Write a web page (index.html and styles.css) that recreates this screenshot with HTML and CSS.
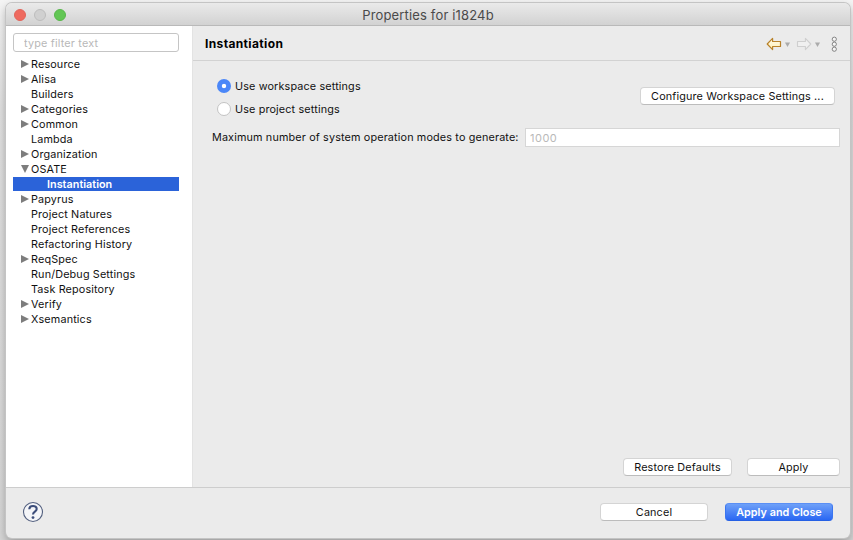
FILE: index.html
```html
<!DOCTYPE html>
<html lang="en">
<head>
<meta charset="utf-8">
<title>Properties for i1824b</title>
<link rel="stylesheet" href="styles.css">
</head>
<body>
<div class="window">
  <header class="titlebar">
    <div class="lights"><i class="light close"></i><i class="light minimize"></i><i class="light zoom"></i></div>
    <span class="title">Properties for i1824b</span>
  </header>
  <div class="body">
    <aside class="sidebar">
      <input class="filter" type="text" placeholder="type filter text">
      <ul class="tree">
        <li class="closed"><span>Resource</span></li>
        <li class="closed"><span>Alisa</span></li>
        <li><span>Builders</span></li>
        <li class="closed"><span>Categories</span></li>
        <li class="closed"><span>Common</span></li>
        <li><span>Lambda</span></li>
        <li class="closed"><span>Organization</span></li>
        <li class="open"><span>OSATE</span></li>
        <li class="selected"><span>Instantiation</span></li>
        <li class="closed"><span>Papyrus</span></li>
        <li><span>Project Natures</span></li>
        <li><span>Project References</span></li>
        <li><span>Refactoring History</span></li>
        <li class="closed"><span>ReqSpec</span></li>
        <li><span>Run/Debug Settings</span></li>
        <li><span>Task Repository</span></li>
        <li class="closed"><span>Verify</span></li>
        <li class="closed"><span>Xsemantics</span></li>
      </ul>
    </aside>
    <main class="page">
      <div class="page-head">
        <h1>Instantiation</h1>
        <svg class="toolbar" width="76" height="18" viewBox="0 0 76 18">
          <defs><linearGradient id="gold" x1="0" y1="0" x2="0" y2="1"><stop offset="0" stop-color="#fffdf0"/><stop offset="1" stop-color="#ffeeb0"/></linearGradient></defs>
          <path d="M1.2 9 L6.6 3.4 V6.5 H14.5 V11.5 H6.6 V14.6 Z" fill="url(#gold)" stroke="#b9832c" stroke-width="1.2" stroke-linejoin="round"/>
          <path d="M19 7.5 H24 L21.5 12 Z" fill="#ababab"/>
          <path d="M44.8 9 L39.4 3.4 V6.5 H31.5 V11.5 H39.4 V14.6 Z" fill="#f0f0f0" stroke="#cfcfcf" stroke-width="1.1" stroke-linejoin="round"/>
          <path d="M49 7.5 H54 L51.5 12 Z" fill="#ababab"/>
          <g fill="#f6f6f6" stroke="#777" stroke-width=".9"><circle cx="68.3" cy="4.2" r="2.1"/><circle cx="68.3" cy="9.2" r="2.1"/><circle cx="68.3" cy="14.2" r="2.1"/></g>
        </svg>
      </div>
      <div class="settings">
        <div class="scope">
          <div class="radios">
            <label><i class="radio checked"></i><span>Use workspace settings</span></label>
            <label><i class="radio"></i><span>Use project settings</span></label>
          </div>
          <button class="configure"><span>Configure Workspace Settings ...</span></button>
        </div>
        <div class="field"><span class="field-label">Maximum number of system operation modes to generate:</span><input type="text" value="1000" disabled></div>
      </div>
      <div class="page-actions">
        <button class="restore"><span>Restore Defaults</span></button>
        <button class="apply"><span>Apply</span></button>
      </div>
    </main>
  </div>
  <footer class="footer">
    <svg class="help" width="22" height="22" viewBox="0 0 22 22">
      <circle cx="11" cy="11" r="9.5" fill="#f4f5f8" stroke="#53607f" stroke-width="1.1"/>
      <path d="M7.3 8.2 C7.3 3.9 14.7 3.9 14.7 8 C14.7 10.6 11 10.6 11 13.4" fill="none" stroke="#3c4d7a" stroke-width="2.1"/>
      <circle cx="11" cy="16.6" r="1.4" fill="#3c4d7a"/>
    </svg>
    <button class="cancel"><span>Cancel</span></button>
    <button class="primary"><span>Apply and Close</span></button>
  </footer>
</div>
</body>
</html>
```

FILE: styles.css
```css
* { box-sizing: border-box; }
html, body { margin: 0; height: 100%; }
body {
  padding: 3px 3px 2px 6px;
  overflow: hidden;
  background: linear-gradient(#f4f4f4, #e0e0e0 20%, #d6d6d6);
  font: 10.8px/15px Inter, "Liberation Sans", sans-serif;
  letter-spacing: .15px;
  color: #111;
}
.window {
  height: 535px;
  display: flex;
  flex-direction: column;
  border-radius: 6px;
  overflow: hidden;
  background: #ebebeb;
  box-shadow: 0 0 0 1px #c4c4c4, 0 4px 10px rgba(0, 0, 0, .3);
}
.titlebar {
  height: 23px;
  flex: none;
  display: grid;
  grid-template-columns: 1fr auto 1fr;
  align-items: center;
  background: linear-gradient(#eaeaea, #d2d2d2);
  border-bottom: 1px solid #b9b9b9;
}
.lights { display: flex; gap: 8px; padding-left: 8px; margin-top: 1px; }
.light { width: 12px; height: 12px; border-radius: 50%; border: 1px solid; }
.close { background: #ee6a5f; border-color: #e1645a; }
.minimize { background: #d0d0d0; border-color: #bcbcbc; }
.zoom { background: #62c654; border-color: #58b64b; }
.title { font-size: 13px; letter-spacing: .16px; color: #4a4a4a; padding-top: 3px; }
.body { flex: 1; display: flex; min-height: 0; }
.sidebar {
  width: 187px;
  flex: none;
  padding: 7px 13px 0 7px;
  background: #fff;
  border-right: 1px solid #e3e3e3;
}
.filter {
  display: block;
  width: 166px;
  height: 19px;
  padding: 1px 10px 0;
  border: 1px solid #c5c5c5;
  border-radius: 3px;
  background: #fff;
  font: inherit;
  letter-spacing: .2px;
}
.filter::placeholder { color: #b8b8b8; opacity: 1; }
.tree { list-style: none; margin: 5px 0 0; padding: 0; }
.tree li { height: 15px; display: flex; align-items: center; padding-left: 8px; }
.tree li::before { content: ""; width: 8px; height: 8px; margin: -1px 2px 0 0; flex: none; }
.tree .closed::before { background: #7d7d7d; clip-path: polygon(0 0, 100% 50%, 0 100%); }
.tree .open::before { background: #7d7d7d; clip-path: polygon(0 0, 100% 0, 50% 100%); }
.tree .selected {
  padding-left: 24px;
  color: #fff;
  font-weight: 600;
  letter-spacing: .03px;
  background: linear-gradient(#2b63d9, #2b63d9) 0 0 / 100% 14px no-repeat;
}
.page { flex: 1; display: flex; flex-direction: column; min-width: 0; }
.page-head {
  height: 35px;
  flex: none;
  display: flex;
  align-items: center;
  justify-content: space-between;
  padding: 0 8px 0 12px;
  border-bottom: 1px solid #d2d2d2;
}
h1 { margin: 1px 0 0; font-size: 12px; line-height: 15px; font-weight: 700; letter-spacing: .36px; color: #000; }
.toolbar { display: block; margin-top: 1px; }
.settings { padding: 18px 10px 0 19px; }
.scope { display: flex; justify-content: space-between; padding: 0 5px; }
.radios { display: flex; flex-direction: column; gap: 9px; }
.radios label { display: flex; align-items: center; gap: 4px; height: 14px; }
.radio { width: 14px; height: 14px; border-radius: 50%; background: #fff; border: 1px solid #c3c3c3; }
.radio.checked { border: 0; background: radial-gradient(circle, #fff 1.8px, #4b87f8 2.6px); }
button {
  height: 18px;
  padding: 2px 0 0;
  border: 1px solid #d4d4d4;
  border-bottom-color: #bcbcbc;
  border-radius: 4px;
  background: #fff;
  color: #111;
  font: inherit;
  line-height: 14px;
  letter-spacing: .15px;
}
.configure { width: 195px; margin: 8px 0 0; }
.field { display: flex; align-items: center; justify-content: space-between; margin-top: 12px; }
.field-label { white-space: nowrap; }
.field input {
  width: 315px;
  height: 19px;
  padding: 1px 4px 0;
  border: 1px solid #d6d6d6;
  background: #fff;
  color: #b9b9b9;
  font: inherit;
  font-size: 11px;
  letter-spacing: .5px;
}
.page-actions { margin-top: auto; display: flex; justify-content: flex-end; gap: 15px; padding: 0 10px 11px 0; }
.restore { width: 109px; }
.apply { width: 93px; }
.footer {
  height: 51px;
  flex: none;
  display: flex;
  align-items: center;
  padding: 0 17px 3px 16px;
  border-top: 1px solid #cdcdcd;
}
.cancel { width: 108px; margin-left: auto; }
.primary {
  width: 108px;
  margin-left: 17px;
  border-color: #5a8ff5 #3a75f0 #2560e4;
  background: linear-gradient(#6ea0f8, #2a67f3);
  color: #fff;
  font-weight: 600;
  letter-spacing: .02px;
}
```
